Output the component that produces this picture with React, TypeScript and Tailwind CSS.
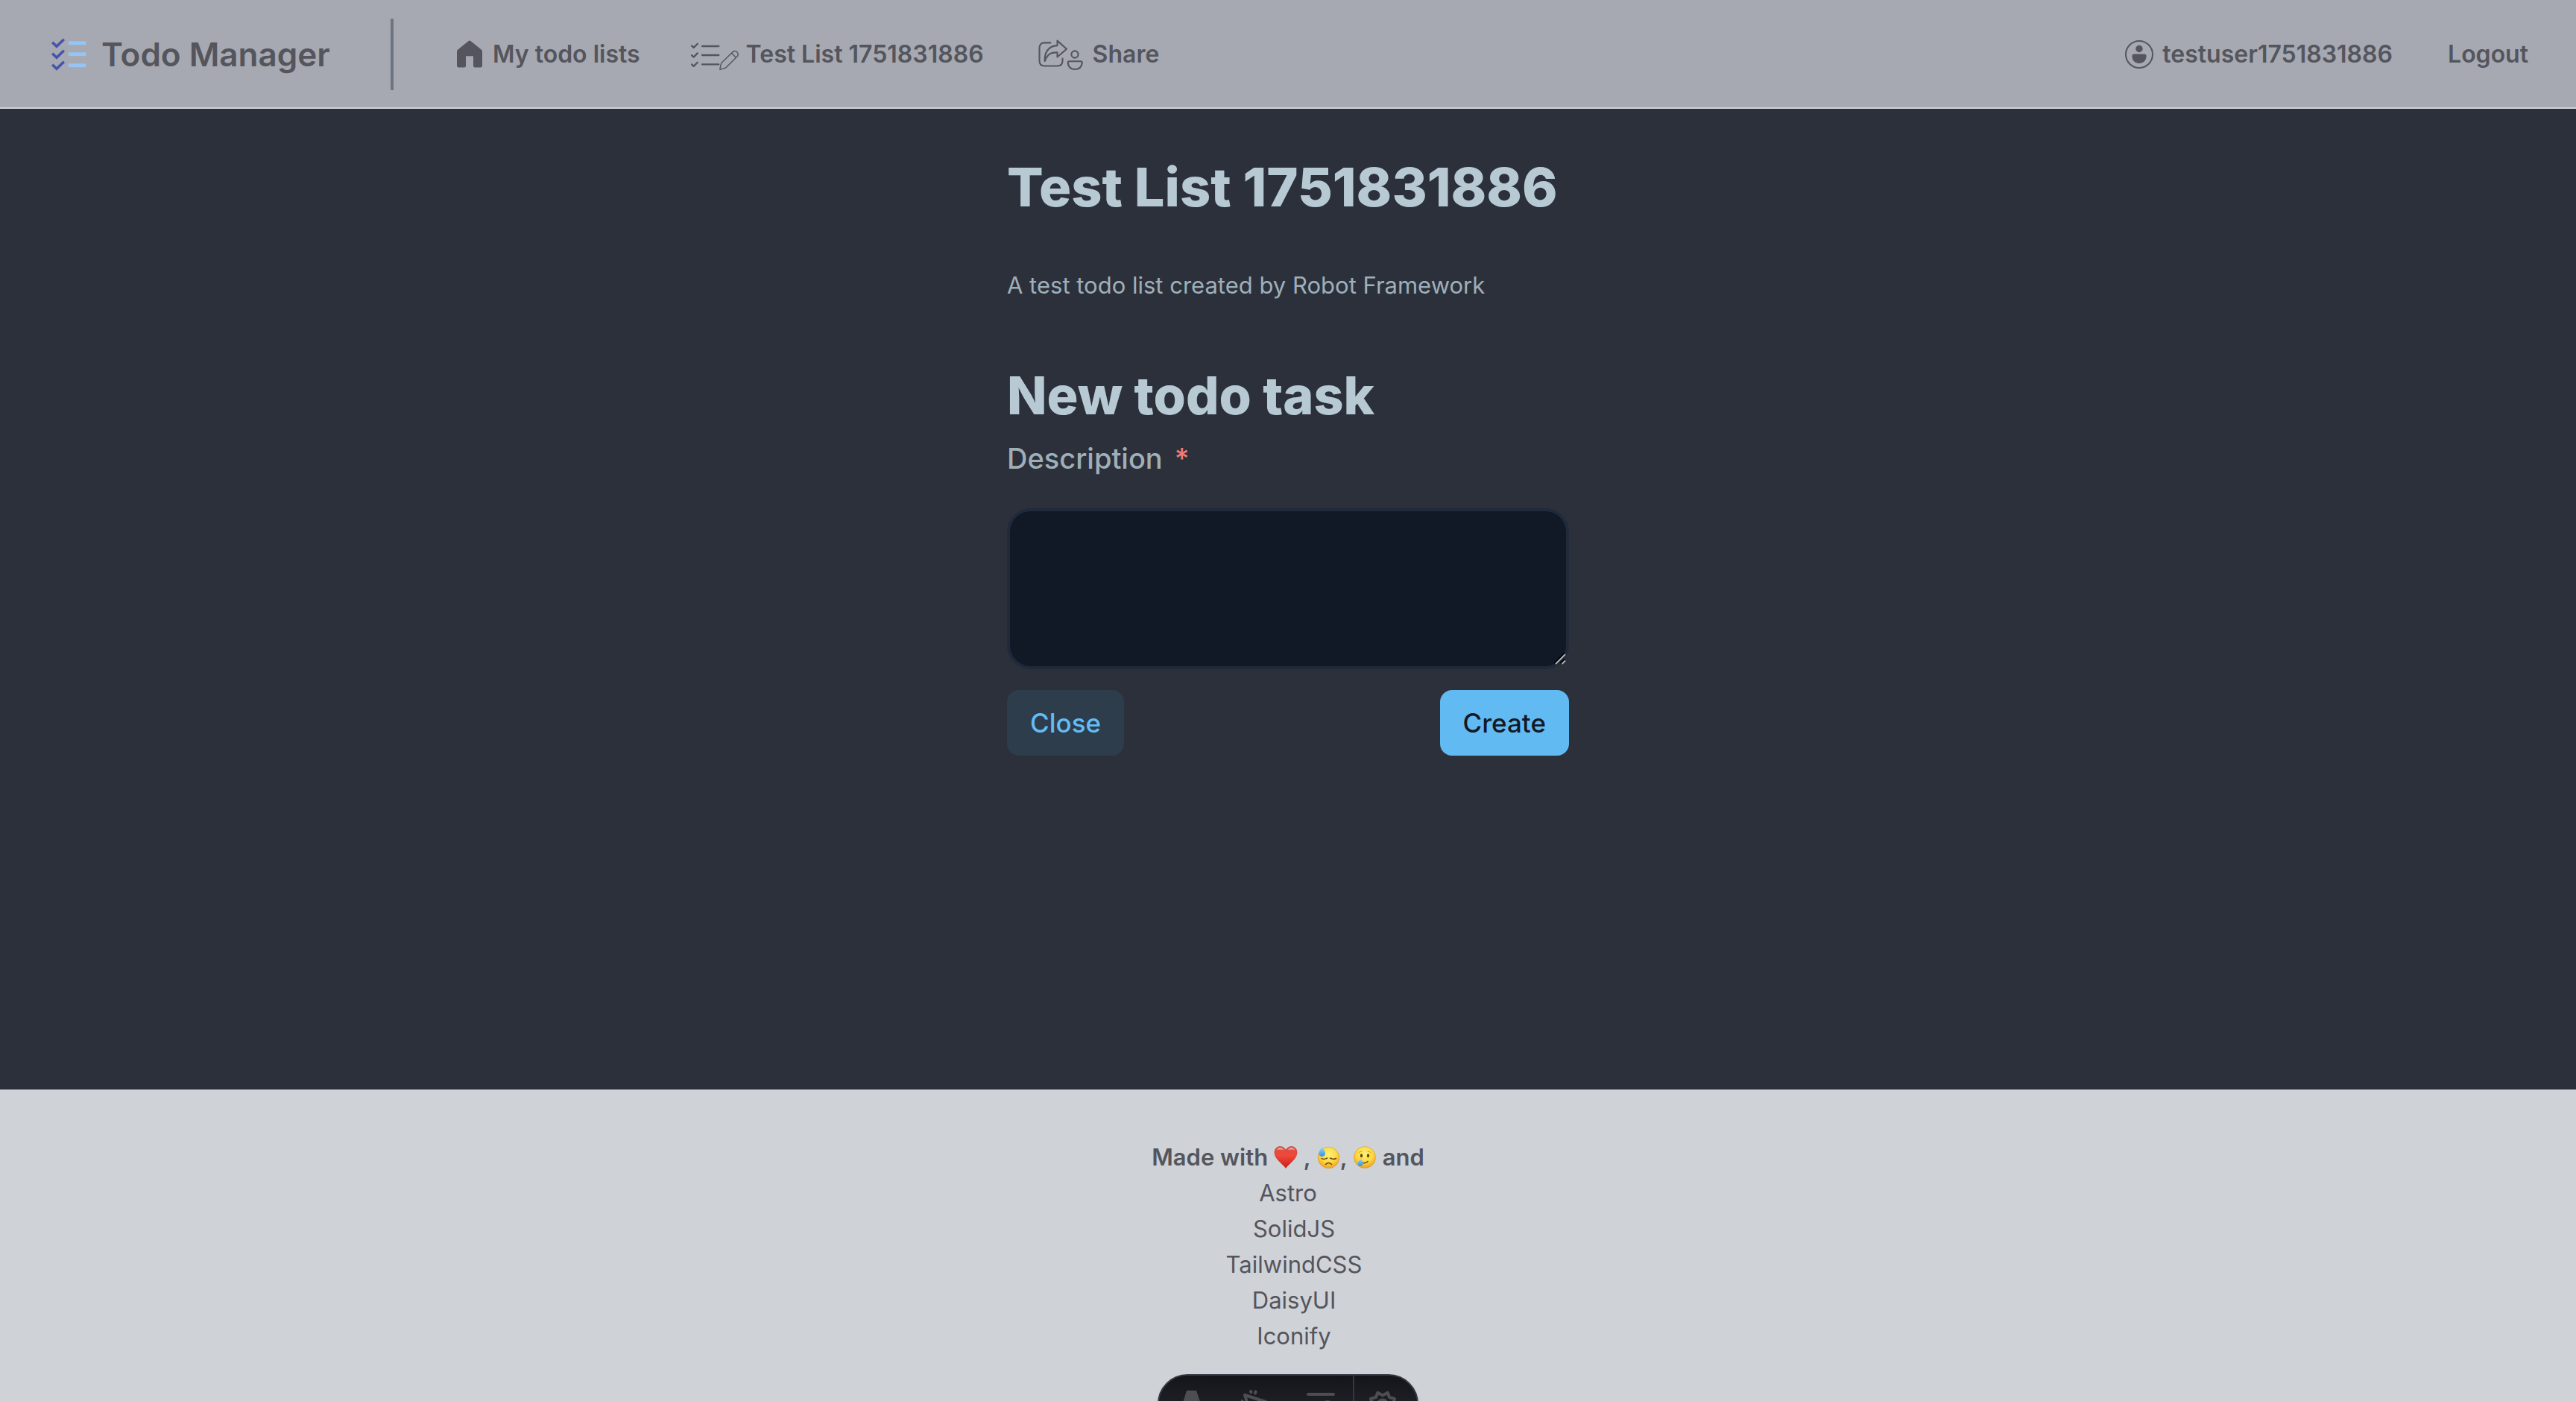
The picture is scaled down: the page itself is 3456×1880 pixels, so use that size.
import type { ReactNode } from "react";

function LogoIcon() {
  return (
    <svg className="h-12 w-12 shrink-0" viewBox="0 0 48 48" fill="none" aria-hidden="true">
      {[0, 15, 30].map((dy) => (
        <g key={dy} transform={`translate(0 ${dy})`}>
          <path d="M2.2 7.8 8 13.2 17.8 3.8" stroke="#4654ad" strokeWidth="3.6" />
          <path d="M24 8.7H47.3" stroke="#96c5f5" strokeWidth="4.8" />
        </g>
      ))}
    </svg>
  );
}

function HomeIcon() {
  return (
    <svg className="h-10 w-[38px] shrink-0" viewBox="0 -1 38 40" fill="currentColor" aria-hidden="true">
      <path d="M15.6 1Q17 0 18.4 1L32.6 12.6Q34 13.8 34 15.6V34Q34 36.5 31.5 36.5H24.5Q22 36.5 22 34V21.3H12V34Q12 36.5 9.5 36.5H2.5Q0 36.5 0 34V15.6Q0 13.8 1.4 12.6Z" />
    </svg>
  );
}

function EditListIcon() {
  return (
    <svg className="h-12 w-16 shrink-0" viewBox="0 -6 64 48" fill="none" stroke="currentColor" strokeLinecap="round" strokeLinejoin="round" aria-hidden="true">
      {[0, 12.7, 25].map((dy) => (
        <path key={dy} d="M.9 6.4 3.7 8.9 8.8 3.7" strokeWidth="2.3" transform={`translate(0 ${dy})`} />
      ))}
      <path d="M15 7H37.3M15 19H37.3M15 31.3H37.3" strokeWidth="2.3" />
      <path d="M38.8 38.2 40.2 31.2Q40.5 30 41.4 29L56.2 14.6Q59.3 12.4 62 15Q64.3 17.8 62.3 20.5L47.5 35.2Q46.5 36.2 45 36.6ZM54.5 16.3 60.5 22.3" strokeWidth="1.4" />
    </svg>
  );
}

function ShareIcon() {
  return (
    <svg className="h-12 w-[68px] shrink-0" viewBox="-5 -4 68 48" fill="none" stroke="currentColor" strokeWidth="2.1" strokeLinecap="round" strokeLinejoin="round" aria-hidden="true">
      <path d="M16.3 4.4H8.5Q1.5 4.4 1.5 11.4V28.5Q1.5 35.5 8.5 35.5H25.5Q32.5 35.5 32.5 28.5V25.6" />
      <path d="M25.5 1.6 38 12.7 25.5 23.5V17.4C17 17 12.5 19.5 8.7 29C8 17 14 8.6 25.5 8.1Z" />
      <circle cx="49" cy="20" r="4.6" />
      <path d="M42 29.3H56.5Q59 29.3 58.8 31.5C58 37 54.3 40 49.2 40C44.2 40 40.5 37 39.7 31.5Q39.5 29.3 42 29.3Z" />
    </svg>
  );
}

function UserIcon() {
  return (
    <svg className="h-10 w-10 shrink-0" viewBox="0 0 40 40" fill="currentColor" aria-hidden="true">
      <circle cx="19" cy="20" r="18" fill="none" stroke="currentColor" strokeWidth="2" />
      <circle cx="19" cy="12.5" r="4.7" />
      <path d="M12.5 19.6H25.5Q28.8 19.6 28.6 22.5C28.2 28.5 24.5 32 19 32S9.8 28.5 9.4 22.5Q9.2 19.6 12.5 19.6Z" />
    </svg>
  );
}

const emojiClass = "inline-block h-8 w-8 align-[-5px]";

function HeartEmoji() {
  return (
    <svg className={emojiClass} viewBox="0 0 32 32" role="img" aria-label="red heart">
      <defs>
        <linearGradient id="heart" x1="0" y1="0" x2="0" y2="1">
          <stop offset="0" stopColor="#d9493e" />
          <stop offset=".4" stopColor="#f04a3c" />
          <stop offset="1" stopColor="#c81e16" />
        </linearGradient>
        <linearGradient id="heart-shine" x1="0" y1="0" x2="0" y2="1">
          <stop offset="0" stopColor="#fff" stopOpacity=".65" />
          <stop offset="1" stopColor="#fff" stopOpacity="0" />
        </linearGradient>
      </defs>
      <path d="M16 30.5C13 25.5 1 18.5 1 9.5C1 4.5 4.5 1.5 8.5 1.5C12 1.5 14.8 3.6 16 6.8C17.2 3.6 20 1.5 23.5 1.5C27.5 1.5 31 4.5 31 9.5C31 18.5 19 25.5 16 30.5Z" fill="url(#heart)" stroke="#bd2a22" strokeWidth=".6" />
      <path d="M3 7.5Q4.5 3 8.5 3T14 7.5Q8.5 4.5 3 7.5ZM18 7.5Q19.5 3 23.5 3T29 7.5Q23.5 4.5 18 7.5Z" fill="url(#heart-shine)" />
    </svg>
  );
}

function FaceDefs({ id }: { id: string }) {
  return (
    <defs>
      <radialGradient id={id} cx=".5" cy=".35" r=".68">
        <stop offset="0" stopColor="#fff27a" />
        <stop offset=".55" stopColor="#fcd93f" />
        <stop offset="1" stopColor="#ec9a26" />
      </radialGradient>
      <linearGradient id={`${id}-drop`} x1="0" y1="0" x2="0" y2="1">
        <stop offset="0" stopColor="#a9dcf8" />
        <stop offset="1" stopColor="#2f94e0" />
      </linearGradient>
    </defs>
  );
}

function SweatEmoji() {
  return (
    <svg className={emojiClass} viewBox="0 0 32 32" role="img" aria-label="downcast face with sweat">
      <FaceDefs id="sweat" />
      <circle cx="16.5" cy="16.5" r="14.3" fill="url(#sweat)" stroke="#d98e26" strokeWidth=".5" />
      <path d="M7 17.5Q10 19.5 14.5 17M18.5 17Q23 19.5 26.5 17.5M12.5 25.5Q16.5 21.5 20.5 25.5" fill="none" stroke="#6b4310" strokeWidth="1.5" strokeLinecap="round" />
      <path d="M7.8 1C9 5 12 7.5 12 10.8A4.3 4.3 0 0 1 3.4 10.8C3.4 7.5 6.5 5 7.8 1Z" fill="url(#sweat-drop)" />
    </svg>
  );
}

function TearEmoji() {
  return (
    <svg className={emojiClass} viewBox="0 0 32 32" role="img" aria-label="smiling face with tear">
      <FaceDefs id="tear" />
      <circle cx="16" cy="16" r="14.5" fill="url(#tear)" stroke="#d98e26" strokeWidth=".5" />
      <ellipse cx="11.5" cy="13.8" rx="1.7" ry="2.5" fill="#6b4310" />
      <ellipse cx="20.5" cy="13.8" rx="1.7" ry="2.5" fill="#6b4310" />
      <path d="M8 9.5Q9.5 8 12 8.2M20 8.2Q22.5 8 24 9.5" fill="none" stroke="#c98a20" strokeWidth=".8" strokeLinecap="round" />
      <path d="M13 23.3Q17 24.5 20 21.5" fill="none" stroke="#6b4310" strokeWidth="1.5" strokeLinecap="round" />
      <path d="M11.5 16.5C11 20 14 21.5 13.6 24.6A3.5 3.5 0 0 1 6.6 24C6.8 20.8 10.2 20 11.5 16.5Z" fill="url(#tear-drop)" />
    </svg>
  );
}

function NavLink({ icon, children }: { icon?: ReactNode; children: ReactNode }) {
  return (
    <a href="#" className="flex items-center gap-2.5 text-[32px] leading-12 font-semibold">
      {icon}
      {children}
    </a>
  );
}

function ToolButton({ label, children }: { label: string; children: ReactNode }) {
  return (
    <button type="button" aria-label={label} className="flex flex-1 items-center justify-center text-[#4d4e51]">
      <svg className="h-10 w-10" viewBox="0 0 40 40" fill="none" stroke="currentColor" strokeWidth="4" strokeLinecap="round" strokeLinejoin="round" aria-hidden="true">
        {children}
      </svg>
    </button>
  );
}

function DevToolbar() {
  return (
    <div className="fixed -bottom-11 left-1/2 flex h-20 w-[350px] -translate-x-1/2 overflow-hidden rounded-full border-2 border-[#343741] bg-linear-to-b from-[#13151a] to-[#2b2c33] shadow-md">
      <ToolButton label="Menu">
        <path d="M14 2H27L38 34Q34 31 25.5 30L21.5 16L17 30Q8 31 4 34Z" fill="currentColor" stroke="none" />
      </ToolButton>
      <ToolButton label="Inspect">
        <path d="M5 8 33 17Q35 18 33 19L21 24 16 36Q15 38 14 36Z" />
        <path d="M13 3 13.500 4M19.500 3.500 19 5.500M.5 16 2 17" />
      </ToolButton>
      <ToolButton label="Audit">
        <path d="M3 7H37M3 20H14M3 33H14" />
        <circle cx="29" cy="25" r="8" />
      </ToolButton>
      <div className="w-0.5 bg-[#343741]" />
      <button type="button" aria-label="Settings" className="flex w-[84px] items-center justify-center text-[#4d4e51]">
        <svg className="mr-2 h-10 w-10" viewBox="0 0 40 40" fill="none" stroke="currentColor" strokeWidth="4" strokeLinejoin="round" aria-hidden="true">
          <path d="M13.300 4.800 20 8.500 26.700 4.800 29 11 36 13 33.500 20.500 36 28 29 30 26.700 36.200 20 33 13.300 36.200 11 30 4 28 6.500 20.500 4 13 11 11Z" />
          <circle cx="20" cy="20.500" r="6" />
        </svg>
      </button>
    </div>
  );
}

const stack = ["SolidJS", "TailwindCSS", "DaisyUI", "Iconify"];

export default function App() {
  return (
    <div className="flex min-h-screen flex-col bg-[#2c303b] font-['Inter',sans-serif]">
      <header className="flex h-[146px] items-center border-b-2 border-[#cfd2d7] bg-[#a6a9b1] pt-0.5 pr-16 pl-[68px] text-[#54555d]">
        <a href="#" className="flex w-[456px] items-center gap-5 text-[44px] leading-14 font-semibold">
          <LogoIcon />
          Todo Manager
        </a>
        <div className="h-24 w-1 bg-[#6d7583]" />
        <nav className="flex flex-1 items-center gap-[68px] pl-[85px]">
          <NavLink icon={<HomeIcon />}>My todo lists</NavLink>
          <NavLink icon={<EditListIcon />}>Test List 1751831886</NavLink>
          <NavLink icon={<ShareIcon />}>Share</NavLink>
        </nav>
        <div className="flex items-center gap-[74px]">
          <NavLink icon={<UserIcon />}>testuser1751831886</NavLink>
          <NavLink>Logout</NavLink>
        </div>
      </header>

      <main className="mx-auto w-full max-w-[754px] flex-1 pt-[65px] text-[#9fafb9]">
        <h1 className="text-[72px] leading-20 font-extrabold whitespace-nowrap text-[#b7cad4]">Test List 1751831886</h1>
        <p className="mt-16 text-[31px] leading-14">A test todo list created by Robot Framework</p>
        <h2 className="mt-20 text-[70px] leading-20 font-extrabold text-[#b7cad4]">New todo task</h2>
        <form>
          <label htmlFor="description" className="mt-5 flex gap-4 text-[38px] leading-12 font-medium">
            Description <span className="text-[#ee7b76]">*</span>
          </label>
          <div className="relative mt-[43px]">
            <textarea
              id="description"
              required
              className="block h-[216px] w-full resize-none rounded-[32px] border-4 border-[#202a3b] bg-[#121926] px-8 py-4 text-[32px] outline-none"
            />
            <svg className="absolute right-1 bottom-1.5 h-4 w-4" viewBox="0 0 16 16" fill="none" strokeWidth="1.8" aria-hidden="true">
              <path d="M0 14 14 0M8.5 14 14 8.5" stroke="#000" />
              <path d="M2 15 15 2M10.5 15 15 10.5" stroke="#b4b5b8" />
            </svg>
          </div>
          <div className="mt-7 flex justify-between text-[35px] leading-14 font-medium">
            <button type="button" className="rounded-2xl bg-[#2d3d4c] px-[31px] py-4 text-[#64bbf5]">
              Close
            </button>
            <button type="submit" className="rounded-2xl bg-[#62baf3] px-[31px] py-4 text-[#131926]">
              Create
            </button>
          </div>
        </form>
      </main>

      <footer className="bg-[#cfd2d7] pt-[67px] pb-[63px] text-center text-[31px] leading-12 text-[#54555d]">
        <p className="font-semibold">
          Made with <HeartEmoji /> , <SweatEmoji />, <TearEmoji /> and
        </p>
        <ul>
          <li>
            <a href="#">Astro</a>
          </li>
          {stack.map((name) => (
            <li key={name} className="pl-4">
              <a href="#">{name}</a>
            </li>
          ))}
        </ul>
      </footer>

      <DevToolbar />
    </div>
  );
}
